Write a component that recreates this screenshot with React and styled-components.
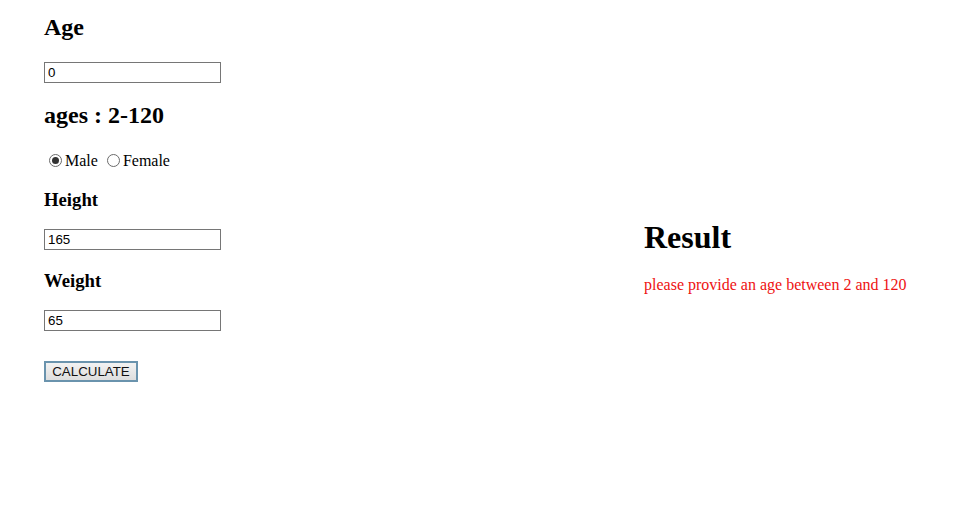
import React, { useState } from 'react'
import styled, { createGlobalStyle } from 'styled-components'

const GlobalStyle = createGlobalStyle`
  body {
    margin: 8px;
    background: #fff;
    color: #000;
    font-family: "Liberation Serif", "Times New Roman", serif;
    font-size: 16px;
  }
`

function App() {
  const [gender, setGender] = useState('male')

  return (
    <>
      <GlobalStyle />
      <Page>
        <FormColumn>
          <Title>Age</Title>
          <Field type="text" defaultValue="0" />
          <Title>ages : 2-120</Title>
          <RadioRow>
            <Radio
              type="radio"
              name="gender"
              checked={gender === 'male'}
              onChange={() => setGender('male')}
            />
            Male{' '}
            <Radio
              type="radio"
              name="gender"
              checked={gender === 'female'}
              onChange={() => setGender('female')}
            />
            Female
          </RadioRow>
          <Label>Height</Label>
          <Field type="text" defaultValue="165" />
          <Label>Weight</Label>
          <Field type="text" defaultValue="65" />
          <CalcButton>CALCULATE</CalcButton>
        </FormColumn>
        <ResultColumn>
          <ResultTitle>Result</ResultTitle>
          <ErrorText>please provide an age between 2 and 120</ErrorText>
        </ResultColumn>
      </Page>
    </>
  )
}

export default App

const Page = styled.div`
  display: flex;
  align-items: flex-start;
  padding-top: 6px;
`
const FormColumn = styled.form`
  display: flex;
  flex-direction: column;
  align-items: flex-start;
  width: 636px;
  flex-shrink: 0;
  padding-left: 36px;
  box-sizing: border-box;
`
const Title = styled.h2`
  font-size: 24px;
  font-weight: 700;
  margin: 0 0 20px;
  line-height: 27.6px;
`
const Label = styled.h3`
  font-size: 18.72px;
  font-weight: 700;
  margin: 0 0 19px;
  line-height: 21.5px;
`
const Field = styled.input`
  width: 177px;
  height: 21px;
  box-sizing: border-box;
  border: 1px solid #767676;
  border-radius: 0;
  padding: 1px 3px;
  margin: 0 0 19.5px;
  font-family: "Liberation Sans", Arial, sans-serif;
  font-size: 13.33px;
  color: #000;
  background: #fff;
  outline: none;
`
const RadioRow = styled.div`
  display: flex;
  align-items: center;
  height: 18px;
  margin: 2px 0 19px;
  font-size: 16px;
  white-space: pre;
`
const Radio = styled.input`
  appearance: none;
  width: 13px;
  height: 13px;
  margin: 0 3px 0 5px;
  border: 1px solid #6b6b6b;
  border-radius: 50%;
  box-sizing: border-box;
  background: #fff;
  position: relative;
  &:checked::after {
    content: '';
    position: absolute;
    left: 2px;
    top: 2px;
    width: 7px;
    height: 7px;
    border-radius: 50%;
    background: #333;
  }
`
const CalcButton = styled.button`
  margin-top: 10.5px;
  width: 94px;
  height: 21px;
  padding: 0;
  border: 2px solid #6a93ad;
  border-radius: 0;
  background: linear-gradient(#f2f2f2, #dedede);
  font-family: "Liberation Sans", Arial, sans-serif;
  font-size: 13.33px;
  color: #111;
`
const ResultColumn = styled.div`
  padding-top: 205px;
`
const ResultTitle = styled.h1`
  font-size: 32px;
  font-weight: 700;
  line-height: 36.8px;
  margin: 0 0 20px;
`
const ErrorText = styled.p`
  margin: 0;
  color: #ee1111;
  font-size: 16px;
  line-height: 18.4px;
`
